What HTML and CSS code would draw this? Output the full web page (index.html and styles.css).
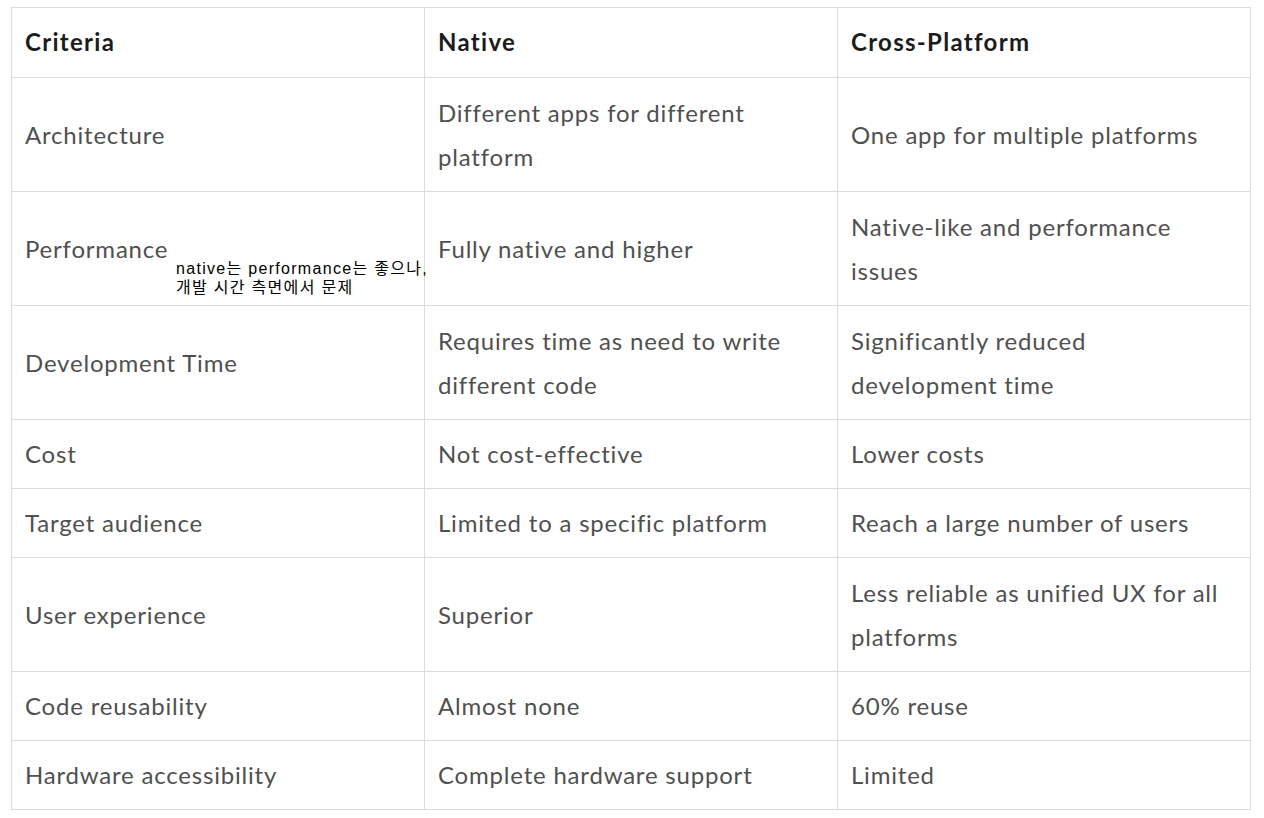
FILE: index.html
```html
<!DOCTYPE html>
<html lang="ko">
<head>
<meta charset="utf-8">
<title>Native vs Cross-Platform</title>
<link rel="stylesheet" href="styles.css">
</head>
<body>
<div class="page">
  <table class="cmp">
    <thead>
      <tr><th>Criteria</th><th>Native</th><th>Cross-Platform</th></tr>
    </thead>
    <tbody>
      <tr class="two"><td>Architecture</td><td>Different apps for different<br>platform</td><td>One app for multiple platforms</td></tr>
      <tr class="two"><td class="perf">Performance<span class="note">native는 performance는 좋으나,<br>개발 시간 측면에서 문제</span></td><td>Fully native and higher</td><td>Native-like and performance<br>issues</td></tr>
      <tr class="two"><td>Development Time</td><td>Requires time as need to write<br>different code</td><td>Significantly reduced<br>development time</td></tr>
      <tr><td>Cost</td><td>Not cost-effective</td><td>Lower costs</td></tr>
      <tr><td>Target audience</td><td>Limited to a specific platform</td><td>Reach a large number of users</td></tr>
      <tr class="two"><td>User experience</td><td>Superior</td><td>Less reliable as unified UX for all<br>platforms</td></tr>
      <tr><td>Code reusability</td><td>Almost none</td><td>60% reuse</td></tr>
      <tr><td>Hardware accessibility</td><td>Complete hardware support</td><td>Limited</td></tr>
    </tbody>
  </table>
</div>
</body>
</html>
```
FILE: styles.css
```css
html, body {
  margin: 0;
  padding: 0;
  background: #ffffff;
}
.page {
  padding: 7px 0 0 11px;
}
.cmp {
  border-collapse: collapse;
  table-layout: fixed;
  width: 1240px;
  font-family: Lato, "Liberation Sans", sans-serif;
  font-size: 24px;
  line-height: 44px;
  letter-spacing: 0.8px;
  color: #505050;
}
.cmp th, .cmp td {
  border: 1px solid #dcdcdc;
  padding: 12px 13px 12px;
  text-align: left;
  vertical-align: middle;
  width: 33.33%;
  white-space: nowrap;
}
.cmp th {
  padding-bottom: 13px;
  font-weight: 700;
  color: #1c1c1c;
  letter-spacing: 1.3px;
}
.cmp tr.two td {
  height: 89px;
}
.perf {
  position: relative;
}
.note {
  position: absolute;
  left: 164px;
  top: 67px;
  font-family: "Liberation Sans", "Noto Sans CJK KR", sans-serif;
  font-size: 16px;
  line-height: 19px;
  letter-spacing: 1.3px;
  color: #000000;
  white-space: nowrap;
}
```
